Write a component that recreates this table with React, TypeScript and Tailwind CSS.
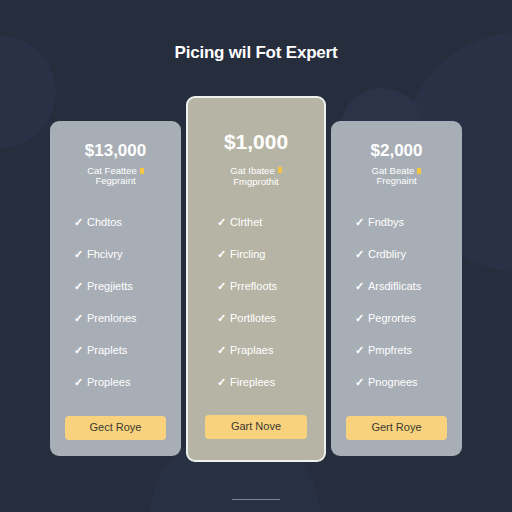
export default function App() {
  const plans = [
    {
      price: "$13,000",
      sub: ["Cat Feattee", "Fegpraint"],
      features: ["Chdtos", "Fhcivry", "Pregjietts", "Prenlones", "Praplets", "Proplees"],
      cta: "Gect Roye",
      featured: false,
    },
    {
      price: "$1,000",
      sub: ["Gat Ibatee", "Fmgprothit"],
      features: ["Clrthet", "Fircling", "Prrefloots", "Portllotes", "Praplaes", "Fireplees"],
      cta: "Gart Nove",
      featured: true,
    },
    {
      price: "$2,000",
      sub: ["Gat Beate", "Fregnaint"],
      features: ["Fndbys", "Crdbliry", "Arsdiflicats", "Pegrortes", "Pmpfrets", "Pnognees"],
      cta: "Gert Roye",
      featured: false,
    },
  ]

  return (
    <div
      className="relative w-[512px] h-[512px] overflow-hidden bg-[#262d3d]"
      style={{ fontFamily: "Arimo, 'Liberation Sans', Arial, sans-serif" }}
    >
      {/* background circles */}
      <div className="absolute -left-[56px] top-[36px] w-[112px] h-[112px] rounded-full bg-[#2a3146]" />
      <div className="absolute left-[402px] top-[32px] w-[240px] h-[240px] rounded-full bg-[#2a3146]" />
      <div className="absolute left-[340px] top-[88px] w-[84px] h-[84px] rounded-full bg-[#2c3348]" />
      <div className="absolute left-[150px] top-[430px] w-[170px] h-[170px] rounded-full bg-[#283044]" />

      <div className="relative flex flex-col items-center">
        <h1 className="mt-[40px] text-[17px] font-bold text-white tracking-[-0.2px]">
          Picing wil Fot Expert
        </h1>

        <div className="mt-[30px] flex items-start gap-[4px]">
          {plans.map((p, i) => (
            <div
              key={i}
              className={
                p.featured
                  ? "w-[140px] h-[366px] rounded-[9px] border-2 border-[#eef0ee] bg-[#b6b5a5] flex flex-col items-center mx-[1px]"
                  : "mt-[25px] w-[131px] h-[335px] rounded-[9px] bg-[#a8aeb5] flex flex-col items-center"
              }
            >
              <div
                className={
                  p.featured
                    ? "mt-[33px] text-[21px] font-bold text-white leading-none"
                    : "mt-[21px] text-[17px] font-bold text-white leading-none"
                }
              >
                {p.price}
              </div>
              <div
                className={
                  p.featured
                    ? "mt-[13px] flex flex-col items-center text-[9.5px] text-white leading-[11px]"
                    : "mt-[7px] flex flex-col items-center text-[9.5px] text-white leading-[10px]"
                }
              >
                <div className="flex items-center gap-[3px]">
                  <span>{p.sub[0]}</span>
                  <span className="inline-block w-[4px] h-[6px] bg-[#f4c542]" />
                </div>
                <span>{p.sub[1]}</span>
              </div>

              <ul
                className={
                  p.featured
                    ? "mt-[29px] w-full pl-[29px] flex flex-col gap-[19px]"
                    : "mt-[30px] w-full pl-[24px] flex flex-col gap-[19px]"
                }
              >
                {p.features.map((f, j) => (
                  <li key={j} className="flex items-center gap-[4px] text-[11px] text-white leading-[13px]">
                    <span className="text-[11px] font-bold">✓</span>
                    <span>{f}</span>
                  </li>
                ))}
              </ul>

              <button
                className={
                  p.featured
                    ? "mt-[26px] w-[102px] h-[24px] rounded-[4px] bg-[#f8d27c] text-[11px] text-[#3a3a34]"
                    : "mt-[27px] w-[101px] h-[24px] rounded-[4px] bg-[#f8d27c] text-[11px] text-[#3a3a34]"
                }
              >
                {p.cta}
              </button>
            </div>
          ))}
        </div>

        <div className="mt-[37px] w-[48px] h-[1px] bg-[#7d8391]" />
      </div>
    </div>
  )
}
